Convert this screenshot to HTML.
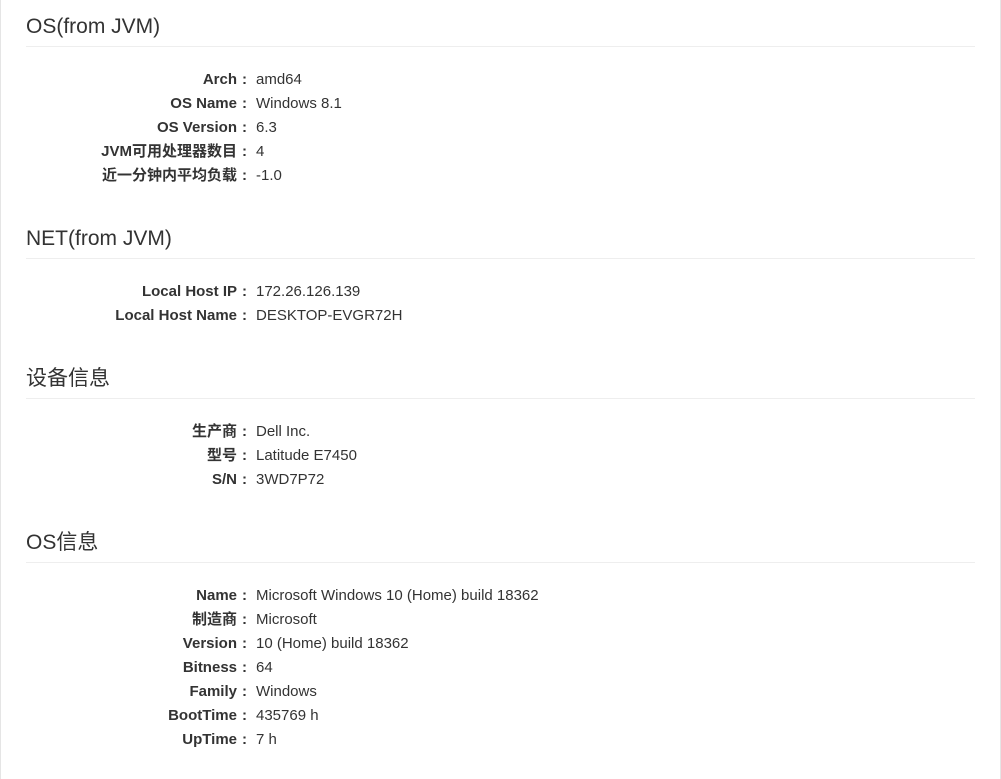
<!DOCTYPE html>
<html><head><meta charset="utf-8"><style>
html,body{margin:0;padding:0;background:#fff;}
body{width:1001px;height:779px;position:relative;overflow:hidden;font-family:"Liberation Sans","Noto Sans CJK SC",sans-serif;color:#333;font-size:15px;}
.bl{position:absolute;left:0;top:0;width:1px;height:779px;background:#e5e5e5}
.br{position:absolute;left:1000px;top:0;width:1px;height:779px;background:#e5e5e5}
h3{position:absolute;left:26px;margin:0;font-size:21px;font-weight:normal;line-height:24px;}
.hr{position:absolute;left:26px;width:949px;height:1px;background:#eee}
.r{position:absolute;left:0;width:1000px;height:20px;line-height:20px;margin-top:2px;}
.r b{position:absolute;right:763px;text-align:right;white-space:nowrap;}
.r i{position:absolute;left:242px;font-style:normal;font-weight:bold;}
.r span{position:absolute;left:256px;white-space:nowrap;}
</style></head><body>
<div class="bl"></div><div class="br"></div>
<h3 style="top:15px">OS(from JVM)</h3><div class="hr" style="top:46px"></div>
<div class="r" style="top:68px"><b>Arch</b><i>:</i><span>amd64</span></div>
<div class="r" style="top:92px"><b>OS Name</b><i>:</i><span>Windows 8.1</span></div>
<div class="r" style="top:116px"><b>OS Version</b><i>:</i><span>6.3</span></div>
<div class="r" style="top:140px"><b>JVM可用处理器数目</b><i>:</i><span>4</span></div>
<div class="r" style="top:164px"><b>近一分钟内平均负载</b><i>:</i><span>-1.0</span></div>

<h3 style="top:227px">NET(from JVM)</h3><div class="hr" style="top:258px"></div>
<div class="r" style="top:280px"><b>Local Host IP</b><i>:</i><span>172.26.126.139</span></div>
<div class="r" style="top:304px"><b>Local Host Name</b><i>:</i><span>DESKTOP-EVGR72H</span></div>

<h3 style="top:367px">设备信息</h3><div class="hr" style="top:398px"></div>
<div class="r" style="top:420px"><b>生产商</b><i>:</i><span>Dell Inc.</span></div>
<div class="r" style="top:444px"><b>型号</b><i>:</i><span>Latitude E7450</span></div>
<div class="r" style="top:468px"><b>S/N</b><i>:</i><span>3WD7P72</span></div>

<h3 style="top:531px">OS信息</h3><div class="hr" style="top:562px"></div>
<div class="r" style="top:584px"><b>Name</b><i>:</i><span>Microsoft Windows 10 (Home) build 18362</span></div>
<div class="r" style="top:608px"><b>制造商</b><i>:</i><span>Microsoft</span></div>
<div class="r" style="top:632px"><b>Version</b><i>:</i><span>10 (Home) build 18362</span></div>
<div class="r" style="top:656px"><b>Bitness</b><i>:</i><span>64</span></div>
<div class="r" style="top:680px"><b>Family</b><i>:</i><span>Windows</span></div>
<div class="r" style="top:704px"><b>BootTime</b><i>:</i><span>435769 h</span></div>
<div class="r" style="top:728px"><b>UpTime</b><i>:</i><span>7 h</span></div>
</body></html>
